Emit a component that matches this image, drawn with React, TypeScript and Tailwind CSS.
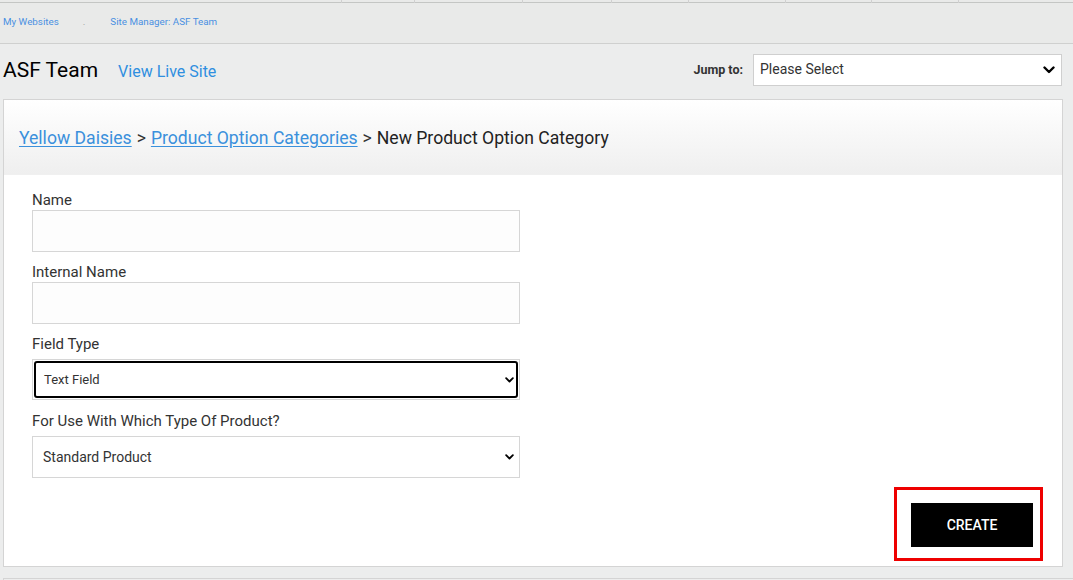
import React from 'react';

const topTabs = [341, 414, 522, 611, 688, 785, 871, 958];

function Chevron({ className }: { className?: string }) {
  return (
    <svg viewBox="0 0 12 8" className={className} fill="none" stroke="currentColor" strokeWidth={2.4} strokeLinecap="round" strokeLinejoin="round">
      <path d="M1.5 1.5 6 6l4.5-4.5" />
    </svg>
  );
}

function Label({ children, className = '' }: { children: React.ReactNode; className?: string }) {
  return <label className={`block text-[15px] leading-[20px] text-[#333] ${className}`}>{children}</label>;
}

export default function App() {
  return (
    <div className="w-[1073px] h-[580px] overflow-hidden bg-[#eceded] text-[#222]" style={{ fontFamily: 'Roboto, "Liberation Sans", sans-serif' }}>
      {/* top tab strip */}
      <div className="relative h-[3px] border-b border-[#c4c6c4] bg-[#e9eae9]">
        {topTabs.map((x) => (
          <div key={x} className="absolute top-0 h-[3px] w-px bg-[#d0d0d0]" style={{ left: x }} />
        ))}
      </div>

      {/* crumbs */}
      <div className="h-[41px] bg-[#e9eae9] border-b border-[#cfd0cf] flex items-center pl-[3px] pb-[2px] text-[9.8px] text-[#4a90e2]">
        <span>My Websites</span>
        <span className="ml-[24px] text-[#999]">.</span>
        <span className="ml-[25px]">Site Manager: ASF Team</span>
      </div>

      {/* header */}
      <div className="h-[55px] flex items-center pl-[3px] pr-[11px] pb-[3px]">
        <h1 className="text-[21px] leading-none text-black">ASF Team</h1>
        <a className="ml-[20px] mt-[3px] text-[16px] text-[#2f8fe0]">View Live Site</a>
        <div className="ml-auto flex items-center">
          <span className="text-[12.5px] font-bold text-[#333] mr-[10px]">Jump to:</span>
          <div className="w-[309px] h-[32px] bg-white border border-[#cfcfcf] flex items-center pl-[6px] pr-[6px] pb-[2px] text-[14px] text-[#333]">
            <span>Please Select</span>
            <Chevron className="ml-auto mt-[2px] w-[12px] h-[8px] text-black" />
          </div>
        </div>
      </div>

      {/* card */}
      <div className="ml-[3px] w-[1060px] h-[468px] bg-white border border-[#d4d4d4]">
        <div className="h-[75px] flex items-center pl-[15px] pt-[3px] border-b border-[#f0f0f0] bg-gradient-to-b from-white to-[#efefef] text-[17.6px]">
          <a className="text-[#3a90dc] underline underline-offset-2">Yellow Daisies</a>
          <span className="mx-[5px] text-[#333]">&gt;</span>
          <a className="text-[#3a90dc] underline underline-offset-2">Product Option Categories</a>
          <span className="mx-[5px] text-[#333]">&gt;</span>
          <span className="text-[#222]">New Product Option Category</span>
        </div>

        <div className="pl-[28px] pt-[15px] w-[516px]">
          <Label>Name</Label>
          <div className="h-[42px] border border-[#d6d6d6] bg-[#fdfdfd]" />

          <Label className="mt-[10px]">Internal Name</Label>
          <div className="h-[42px] border border-[#d6d6d6] bg-[#fdfdfd]" />

          <Label className="mt-[10px] mb-[5px]">Field Type</Label>
          <div className="h-[41px] border border-[#d6d6d6] p-[1px]">
            <div className="h-full rounded-[3px] border-2 border-black flex items-center pl-[8px] pr-[2px] text-[13px] text-[#333]">
              <span>Text Field</span>
              <Chevron className="ml-auto w-[9px] h-[6px] text-black" />
            </div>
          </div>

          <Label className="mt-[11px] mb-[5px]">For Use With Which Type Of Product?</Label>
          <div className="h-[42px] border border-[#d6d6d6] flex items-center pl-[10px] pr-[5px] text-[14px] text-[#333]">
            <span>Standard Product</span>
            <Chevron className="ml-auto w-[9px] h-[6px] text-black" />
          </div>
        </div>

        <div className="flex justify-end pr-[19px] mt-[9px]">
          <div className="border-[3px] border-[#e00] w-[149px] h-[74px] flex justify-end items-start pr-[7px] pt-[13px]">
            <button className="w-[122px] h-[44px] bg-black text-white text-[14px] font-medium">CREATE</button>
          </div>
        </div>
      </div>

      <div className="mt-[11px] ml-[3px] h-[10px] border-t border-l border-[#d4d4d4]" />
    </div>
  );
}
